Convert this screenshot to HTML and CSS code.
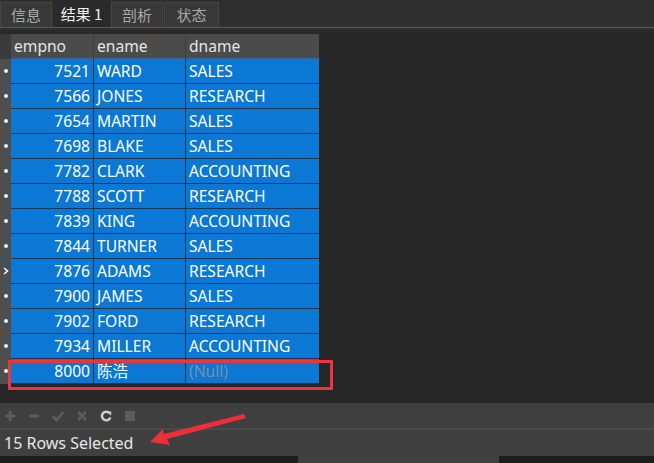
FILE: index.html
```html
<!DOCTYPE html>
<html>
<head>
<meta charset="utf-8">
<link rel="stylesheet" href="styles.css">
</head>
<body>
<div class="page">
  <div class="tabs">
    <div class="tab t1">信息</div>
    <div class="tab active">结果 1</div>
    <div class="tab t3">剖析</div>
    <div class="tab t4">状态</div>
  </div>
  <div class="shade"></div>
  <div class="main">
    <div class="grid">
      <div class="ind corner"></div>
      <div class="hd">empno</div>
      <div class="hd">ename</div>
      <div class="hd last">dname</div>

      <div class="ind"><span class="dot"></span></div><div class="c num">7521</div><div class="c">WARD</div><div class="c last">SALES</div>
      <div class="ind"><span class="dot"></span></div><div class="c num">7566</div><div class="c">JONES</div><div class="c last">RESEARCH</div>
      <div class="ind"><span class="dot"></span></div><div class="c num">7654</div><div class="c">MARTIN</div><div class="c last">SALES</div>
      <div class="ind"><span class="dot"></span></div><div class="c num">7698</div><div class="c">BLAKE</div><div class="c last">SALES</div>
      <div class="ind"><span class="dot"></span></div><div class="c num">7782</div><div class="c">CLARK</div><div class="c last">ACCOUNTING</div>
      <div class="ind"><span class="dot"></span></div><div class="c num">7788</div><div class="c">SCOTT</div><div class="c last">RESEARCH</div>
      <div class="ind"><span class="dot"></span></div><div class="c num">7839</div><div class="c">KING</div><div class="c last">ACCOUNTING</div>
      <div class="ind"><span class="dot"></span></div><div class="c num">7844</div><div class="c">TURNER</div><div class="c last">SALES</div>
      <div class="ind"><svg class="cur" width="6" height="8" viewBox="0 0 6 8"><path d="M1 1 L4.5 4 L1 7" fill="none" stroke="#fff" stroke-width="1.5"/></svg></div><div class="c num">7876</div><div class="c">ADAMS</div><div class="c last">RESEARCH</div>
      <div class="ind"><span class="dot"></span></div><div class="c num">7900</div><div class="c">JAMES</div><div class="c last">SALES</div>
      <div class="ind"><span class="dot"></span></div><div class="c num">7902</div><div class="c">FORD</div><div class="c last">RESEARCH</div>
      <div class="ind"><span class="dot"></span></div><div class="c num">7934</div><div class="c">MILLER</div><div class="c last">ACCOUNTING</div>
      <div class="ind"><span class="dot"></span></div><div class="c num">8000</div><div class="c">陈浩</div><div class="c last null">(Null)</div>
    </div>
  </div>
  <div class="toolbar">
    <svg class="tb" width="14" height="14" viewBox="0 0 14 14"><path d="M7 2v10M2 7h10" stroke="#5c5c5c" stroke-width="3"/></svg>
    <svg class="tb" width="14" height="14" viewBox="0 0 14 14"><path d="M2 7h10" stroke="#5c5c5c" stroke-width="3"/></svg>
    <svg class="tb" width="14" height="14" viewBox="0 0 14 14"><path d="M2 7.5l3.5 3.5L12.5 3" fill="none" stroke="#5c5c5c" stroke-width="2.6"/></svg>
    <svg class="tb" width="14" height="14" viewBox="0 0 14 14"><path d="M3 3l8 8M11 3l-8 8" stroke="#5c5c5c" stroke-width="2.6"/></svg>
    <svg class="tb" width="14" height="14" viewBox="0 0 14 14"><path d="M10.5 4.2A4.3 4.3 0 1 0 11.3 8.5" fill="none" stroke="#d0d0d0" stroke-width="2.4"/><path d="M8 2.5h4.2v4.2z" fill="#d0d0d0"/></svg>
    <svg class="tb" width="14" height="14" viewBox="0 0 14 14"><rect x="2" y="2" width="10" height="10" fill="#5c5c5c"/></svg>
  </div>
  <div class="status">15 Rows Selected</div>
  <div class="scroll"><div class="thumb"></div></div>
  <svg class="annot" width="654" height="463" viewBox="0 0 654 463">
    <rect x="9.5" y="361.5" width="322" height="27" fill="none" stroke="#e8363c" stroke-width="3"/>
    <path d="M150 442 L163 429 L164 434 L244 414 L246 418 L167 439 L170 445 Z" fill="#ee2f3a"/>
  </svg>
</div>
</body>
</html>
```
FILE: styles.css
```css
html, body {
  margin: 0;
  padding: 0;
  background: #262626;
}
.page {
  position: relative;
  width: 654px;
  height: 463px;
  display: flex;
  flex-direction: column;
  font-family: "Noto Sans", "Noto Sans CJK SC", sans-serif;
  overflow: hidden;
}
.tabs {
  height: 27px;
  background: #2f2f2f;
  border-bottom: 1px solid #595959;
  display: flex;
  align-items: flex-end;
  box-sizing: content-box;
}
.tab {
  height: 25px;
  box-sizing: border-box;
  border: 1px solid #454545;
  border-bottom: none;
  background: #383838;
  color: #a8a8a8;
  font-family: "Noto Sans CJK SC", sans-serif;
  font-size: 15px;
  line-height: 24px;
  white-space: nowrap;
  text-align: center;
  margin-right: 1px;
  flex: none;
}
.t1 { width: 52px; }
.tab.active {
  background: #2a2a2a;
  color: #f0f0f0;
  width: 57px;
  height: 27px;
  line-height: 26px;
  border-color: #2a2a2a;
}
.t3 { width: 52px; }
.t4 { width: 55px; }
.shade {
  height: 6px;
  background: linear-gradient(#303030, #262626);
}
.main {
  height: 369px;
  background: #262626;
}
.grid {
  display: grid;
  grid-template-columns: 11px 83px 92px 134px;
  grid-auto-rows: 25px;
  width: 320px;
}
.ind {
  background: #4e4e4e;
  display: flex;
  align-items: center;
  justify-content: center;
  border-bottom: 1px solid #4e4e4e;
}
.ind.corner {
  background: #3a3a3a;
  border-bottom-color: #3a3a3a;
}
.dot {
  width: 4px;
  height: 4px;
  border-radius: 50%;
  background: #f2f2f2;
}
.hd {
  background: #4b4b4b;
  color: #e6e6e6;
  font-size: 15.6px;
  line-height: 24px;
  padding-left: 3px;
  border-right: 1px solid #3e3e3e;
  border-bottom: 1px solid #3d5f86;
}
.c {
  background: #0a78d4;
  color: #ffffff;
  font-size: 15.6px;
  line-height: 23px;
  padding: 1px 3px 0;
  border-right: 1px solid #1e3552;
  border-bottom: 1px solid #1e3552;
  white-space: nowrap;
  overflow: hidden;
}
.c.last, .hd.last { border-right: 1px solid #262626; }
.num { text-align: right; }
.null { color: #7c8fa6; }
.toolbar {
  height: 25px;
  background: #3f3f3f;
  border-bottom: 2px solid #4a4a4a;
  display: flex;
  align-items: center;
  gap: 10px;
  padding-left: 3px;
}
.tb { display: block; }
.status {
  height: 26px;
  background: #3f3f3f;
  color: #e6e6e6;
  font-size: 16px;
  line-height: 26px;
  padding-left: 4px;
}
.scroll {
  height: 7px;
  background: #1d1d1d;
  display: flex;
}
.thumb {
  margin-left: 298px;
  width: 201px;
  background: #404040;
}
.annot {
  position: absolute;
  left: 0;
  top: 0;
  pointer-events: none;
}
```
